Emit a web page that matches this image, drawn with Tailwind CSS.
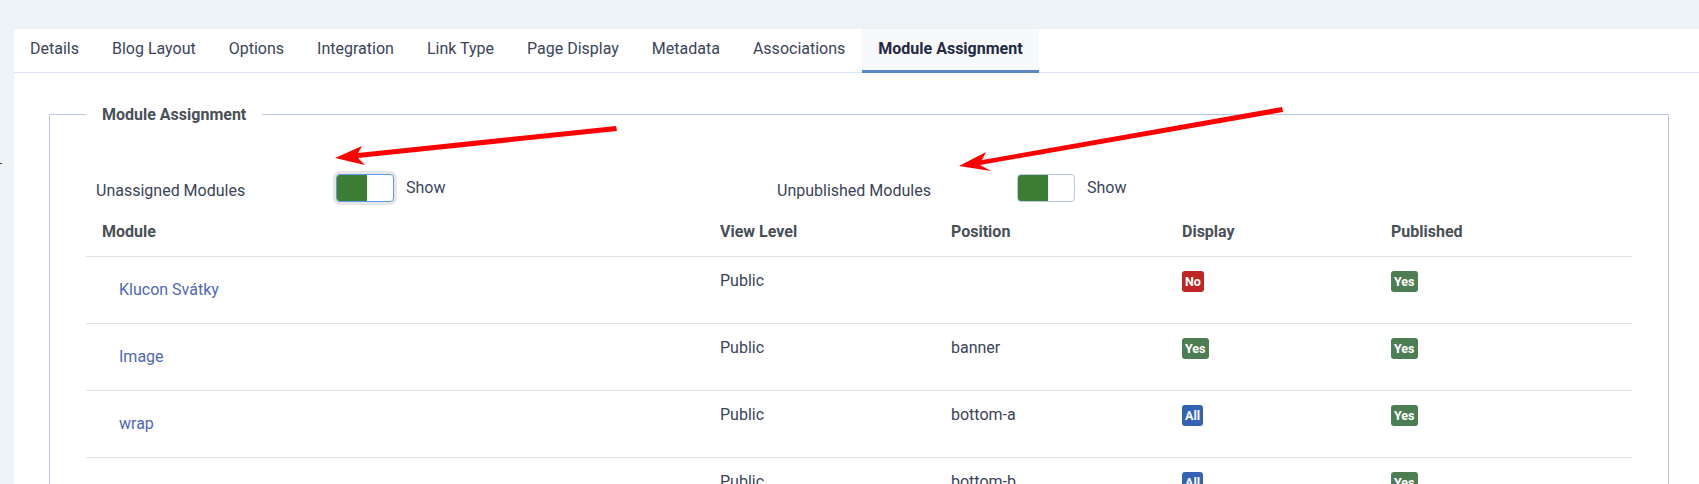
<!DOCTYPE html>
<html lang="en">
<head>
<meta charset="UTF-8">
<title>Module Assignment</title>
<script src="https://cdn.jsdelivr.net/npm/@tailwindcss/browser@4"></script>
</head>
<body class="m-0">
<div class="relative h-[484px] w-[1699px] overflow-hidden bg-[#edf2f6] pt-[29px] pl-[14px] font-[Roboto,sans-serif] text-base text-[#3b4458]">
  <!-- stray mark at the left edge -->
  <div class="absolute left-0 top-[163px] h-px w-[2px] bg-[#333]"></div>

  <div class="h-[455px] rounded-tl-[4px] bg-white">
    <!-- tabs -->
    <div class="flex h-[44px] gap-px border-b border-[#dde5f2]">
      <div class="px-4 pt-[8px]">Details</div>
      <div class="px-4 pt-[8px]">Blog Layout</div>
      <div class="px-4 pt-[8px]">Options</div>
      <div class="px-4 pt-[8px]">Integration</div>
      <div class="px-4 pt-[8px]">Link Type</div>
      <div class="px-4 pt-[8px]">Page Display</div>
      <div class="px-4 pt-[8px]">Metadata</div>
      <div class="px-4 pt-[8px]">Associations</div>
      <div class="-mb-px border-b-[3px] border-[#5a87c6] bg-[#f8f9fb] px-4 pt-[8px] font-bold text-[#1f2a44]">Module Assignment</div>
    </div>

    <fieldset class="mt-[28px] ml-[35px] w-[1620px] border border-[#b8c8e4] pb-4">
      <legend class="ml-[36px] px-4 pt-[2px] font-bold text-[#495057]">Module Assignment</legend>

      <div class="mt-[47px] ml-[46px] flex h-[28px]">
        <div class="w-[240px] pt-[5px]">Unassigned Modules</div>
        <div class="h-[28px] w-[58px] overflow-hidden rounded-[4px] border border-[#5a9be8] bg-white ring-3 ring-[#e6e6e6]">
          <div class="h-full w-[30px] bg-[#3b7d33]"></div>
        </div>
        <div class="ml-[12px] w-[371px] pt-[2px]">Show</div>
        <div class="w-[240px] pt-[5px]">Unpublished Modules</div>
        <div class="h-[28px] w-[58px] overflow-hidden rounded-[4px] border border-[#b8c8de] bg-white">
          <div class="h-full w-[30px] bg-[#3b7d33]"></div>
        </div>
        <div class="ml-[12px] pt-[2px]">Show</div>
      </div>

      <table class="mt-[6px] ml-[36px] w-[1546px] table-fixed border-collapse text-left">
        <colgroup>
          <col class="w-[618px]">
          <col class="w-[231px]">
          <col class="w-[231px]">
          <col class="w-[209px]">
          <col class="w-[257px]">
        </colgroup>
        <thead>
          <tr class="h-[48px] border-b border-[#dee2e6] font-bold text-[#495057]">
            <th class="px-4">Module</th>
            <th class="px-4">View Level</th>
            <th class="px-4">Position</th>
            <th class="px-4">Display</th>
            <th class="px-4">Published</th>
          </tr>
        </thead>
        <tbody>
          <tr class="h-[67px] border-b border-[#dee2e6] align-top">
            <td class="pt-[21px] pl-[33px] text-[#4f68b5]">Klucon Svátky</td>
            <td class="px-4 pt-3">Public</td>
            <td class="px-4 pt-3"></td>
            <td class="px-4 pt-[14px]"><span class="block w-fit rounded-[3px] bg-[#c02424] px-[3px] text-[12.5px] leading-[21px] font-bold text-white">No</span></td>
            <td class="px-4 pt-[14px]"><span class="block w-fit rounded-[3px] bg-[#4d7d53] px-[3px] text-[12.5px] leading-[21px] font-bold text-white">Yes</span></td>
          </tr>
          <tr class="h-[67px] border-b border-[#dee2e6] align-top">
            <td class="pt-[21px] pl-[33px] text-[#4f68b5]">Image</td>
            <td class="px-4 pt-3">Public</td>
            <td class="px-4 pt-3">banner</td>
            <td class="px-4 pt-[14px]"><span class="block w-fit rounded-[3px] bg-[#4d7d53] px-[3px] text-[12.5px] leading-[21px] font-bold text-white">Yes</span></td>
            <td class="px-4 pt-[14px]"><span class="block w-fit rounded-[3px] bg-[#4d7d53] px-[3px] text-[12.5px] leading-[21px] font-bold text-white">Yes</span></td>
          </tr>
          <tr class="h-[67px] border-b border-[#dee2e6] align-top">
            <td class="pt-[21px] pl-[33px] text-[#4f68b5]">wrap</td>
            <td class="px-4 pt-3">Public</td>
            <td class="px-4 pt-3">bottom-a</td>
            <td class="px-4 pt-[14px]"><span class="block w-fit rounded-[3px] bg-[#3563b3] px-[3px] text-[12.5px] leading-[21px] font-bold text-white">All</span></td>
            <td class="px-4 pt-[14px]"><span class="block w-fit rounded-[3px] bg-[#4d7d53] px-[3px] text-[12.5px] leading-[21px] font-bold text-white">Yes</span></td>
          </tr>
          <tr class="h-[67px] border-b border-[#dee2e6] align-top">
            <td class="pt-[21px] pl-[33px] text-[#4f68b5]"></td>
            <td class="px-4 pt-3">Public</td>
            <td class="px-4 pt-3">bottom-b</td>
            <td class="px-4 pt-[14px]"><span class="block w-fit rounded-[3px] bg-[#3563b3] px-[3px] text-[12.5px] leading-[21px] font-bold text-white">All</span></td>
            <td class="px-4 pt-[14px]"><span class="block w-fit rounded-[3px] bg-[#4d7d53] px-[3px] text-[12.5px] leading-[21px] font-bold text-white">Yes</span></td>
          </tr>
        </tbody>
      </table>
    </fieldset>
  </div>

  <!-- red annotation arrows -->
  <svg class="absolute left-0 top-0" width="1699" height="484" viewBox="0 0 1699 484">
    <polygon fill="#fe0000" points="335,158 362,146 358,153 616,126 617,131 358,158 365,165"/>
    <polygon fill="#fe0000" points="959,166 986,152 982,160 1282,107 1283,112 980,165 991,171"/>
  </svg>
</div>
</body>
</html>
